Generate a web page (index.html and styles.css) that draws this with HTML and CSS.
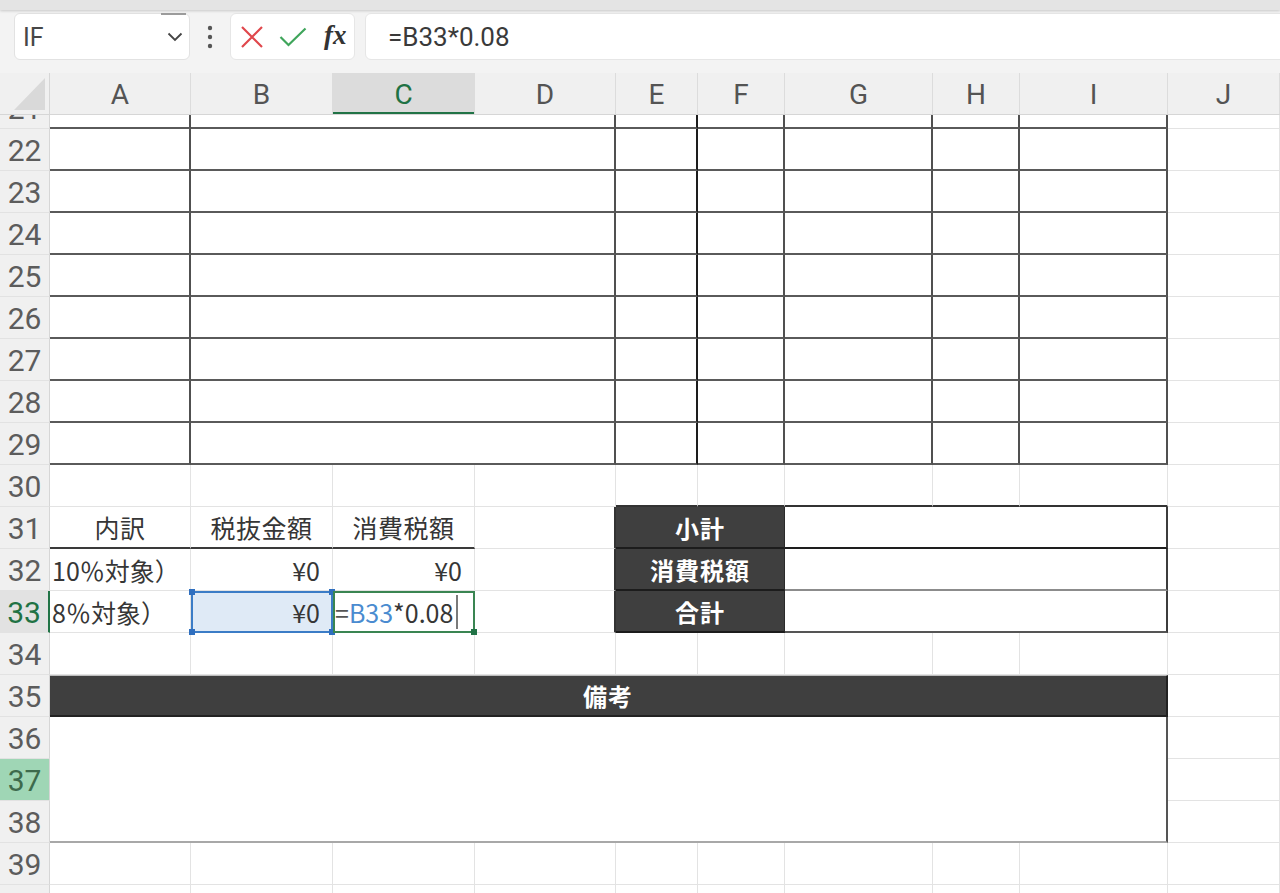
FILE: index.html
```html
<!DOCTYPE html>
<html lang="ja">
<head>
<meta charset="utf-8">
<title>Sheet</title>
<link rel="stylesheet" href="styles.css">
</head>
<body>
<div class="app">
  <div class="ribbon-edge"></div>
  <div class="fbar">
    <div class="namebox">
      <span class="nb-text">IF</span>
      <svg class="chev" width="16" height="10" viewBox="0 0 16 10"><polyline points="1.5,1.5 8,8 14.5,1.5" fill="none" stroke="#444" stroke-width="1.8"/></svg>
    </div>
    <div class="dots">
      <svg width="6" height="24" viewBox="0 0 6 24"><circle cx="3" cy="3" r="2.2" fill="#555"/><circle cx="3" cy="12" r="2.2" fill="#555"/><circle cx="3" cy="21" r="2.2" fill="#555"/></svg>
    </div>
    <div class="fx-tools">
      <svg class="ico-x" width="24" height="24" viewBox="0 0 24 24"><path d="M2 2 L22 22 M22 2 L2 22" stroke="#e0474c" stroke-width="2.2" fill="none"/></svg>
      <svg class="ico-ok" width="28" height="20" viewBox="0 0 28 20"><polyline points="1.5,10 9.5,18 26.5,1.5" fill="none" stroke="#3fa55b" stroke-width="2.2"/></svg>
      <span class="fx">fx</span>
    </div>
    <div class="formula">=B33*0.08</div>
  </div>

  <div class="colhead">
    <div class="corner"><svg width="50" height="41" viewBox="0 0 50 41"><polygon points="45,5 45,37 14,37" fill="#d9d9d9"/></svg></div>
    <div class="ch">A</div>
    <div class="ch">B</div>
    <div class="ch active">C</div>
    <div class="ch">D</div>
    <div class="ch">E</div>
    <div class="ch">F</div>
    <div class="ch">G</div>
    <div class="ch">H</div>
    <div class="ch">I</div>
    <div class="ch">J</div>
  </div>

  <div class="viewport">
    <div class="grid">
      <!-- 21 -->
      <div class="rh">21</div>
      <div class="c t"></div><div class="c t span3"></div><div class="c t heavy"></div><div class="c t"></div><div class="c t"></div><div class="c t"></div><div class="c t"></div><div class="c"></div>
      <!-- 22 -->
      <div class="rh">22</div>
      <div class="c t"></div><div class="c t span3"></div><div class="c t heavy"></div><div class="c t"></div><div class="c t"></div><div class="c t"></div><div class="c t"></div><div class="c"></div>
      <!-- 23 -->
      <div class="rh">23</div>
      <div class="c t"></div><div class="c t span3"></div><div class="c t heavy"></div><div class="c t"></div><div class="c t"></div><div class="c t"></div><div class="c t"></div><div class="c"></div>
      <!-- 24 -->
      <div class="rh">24</div>
      <div class="c t"></div><div class="c t span3"></div><div class="c t heavy"></div><div class="c t"></div><div class="c t"></div><div class="c t"></div><div class="c t"></div><div class="c"></div>
      <!-- 25 -->
      <div class="rh">25</div>
      <div class="c t"></div><div class="c t span3"></div><div class="c t heavy"></div><div class="c t"></div><div class="c t"></div><div class="c t"></div><div class="c t"></div><div class="c"></div>
      <!-- 26 -->
      <div class="rh">26</div>
      <div class="c t"></div><div class="c t span3"></div><div class="c t heavy"></div><div class="c t"></div><div class="c t"></div><div class="c t"></div><div class="c t"></div><div class="c"></div>
      <!-- 27 -->
      <div class="rh">27</div>
      <div class="c t"></div><div class="c t span3"></div><div class="c t heavy"></div><div class="c t"></div><div class="c t"></div><div class="c t"></div><div class="c t"></div><div class="c"></div>
      <!-- 28 -->
      <div class="rh">28</div>
      <div class="c t"></div><div class="c t span3"></div><div class="c t heavy"></div><div class="c t"></div><div class="c t"></div><div class="c t"></div><div class="c t"></div><div class="c"></div>
      <!-- 29 -->
      <div class="rh">29</div>
      <div class="c t"></div><div class="c t span3"></div><div class="c t heavy"></div><div class="c t"></div><div class="c t"></div><div class="c t"></div><div class="c t"></div><div class="c"></div>
      <!-- 30 -->
      <div class="rh">30</div>
      <div class="c"></div><div class="c"></div><div class="c"></div><div class="c"></div>
      <div class="c bb-dark"></div><div class="c bb-dark"></div><div class="c bb-dark"></div><div class="c bb-dark"></div><div class="c bb-dark"></div>
      <div class="c"></div>
      <!-- 31 -->
      <div class="rh">31</div>
      <div class="c center hdr-line">内訳</div>
      <div class="c center hdr-line">税抜金額</div>
      <div class="c center hdr-line">消費税額</div>
      <div class="c br-dark"></div>
      <div class="c lbl span2">小計</div>
      <div class="c val span3"></div>
      <div class="c"></div>
      <!-- 32 -->
      <div class="rh">32</div>
      <div class="c left">10％対象）</div>
      <div class="c right">¥0</div>
      <div class="c right">¥0</div>
      <div class="c br-dark"></div>
      <div class="c lbl span2">消費税額</div>
      <div class="c val span3 thin"></div>
      <div class="c"></div>
      <!-- 33 -->
      <div class="rh sel">33</div>
      <div class="c left">8％対象）</div>
      <div class="c right ref">¥0<span class="hd tl"></span><span class="hd tr"></span><span class="hd bl"></span><span class="hd br"></span></div>
      <div class="c edit"><span class="eq">=</span><span class="refc">B33</span><span>*0.08</span><span class="caret"></span><span class="fill"></span></div>
      <div class="c br-dark"></div>
      <div class="c lbl span2">合計</div>
      <div class="c val span3 last"></div>
      <div class="c"></div>
      <!-- 34 -->
      <div class="rh">34</div>
      <div class="c"></div><div class="c"></div><div class="c"></div><div class="c"></div><div class="c"></div><div class="c"></div><div class="c"></div><div class="c"></div><div class="c"></div><div class="c"></div>
      <!-- 35 -->
      <div class="rh">35</div>
      <div class="c bar span9">備考</div>
      <div class="c"></div>
      <!-- 36 -->
      <div class="rh">36</div>
      <div class="c memo"></div>
      <div class="c"></div>
      <!-- 37 -->
      <div class="rh hl">37</div>
      <div class="c"></div>
      <!-- 38 -->
      <div class="rh">38</div>
      <div class="c"></div>
      <!-- 39 -->
      <div class="rh">39</div>
      <div class="c"></div><div class="c"></div><div class="c"></div><div class="c"></div><div class="c"></div><div class="c"></div><div class="c"></div><div class="c"></div><div class="c"></div><div class="c"></div>
      <!-- 40 -->
      <div class="rh">40</div>
      <div class="c"></div><div class="c"></div><div class="c"></div><div class="c"></div><div class="c"></div><div class="c"></div><div class="c"></div><div class="c"></div><div class="c"></div><div class="c"></div>
    </div>
  </div>
</div>
</body>
</html>
```

FILE: styles.css
```css
html, body {
  margin: 0;
  padding: 0;
  background: #ffffff;
}

body {
  font-family: "Noto Sans CJK JP", "Noto Sans", sans-serif;
  color: #333;
}

.app {
  width: 1280px;
  height: 893px;
  overflow: hidden;
  display: flex;
  flex-direction: column;
}

.ribbon-edge {
  height: 10px;
  flex: none;
  background: #e4e4e4;
  box-shadow: 0 1px 3px rgba(0, 0, 0, 0.18);
  position: relative;
  z-index: 1;
}

/* formula bar */
.fbar {
  flex: none;
  height: 63px;
  box-sizing: border-box;
  background: #f3f3f3;
  display: flex;
  align-items: flex-start;
  padding: 3px 0 0 14px;
  overflow: hidden;
}

.namebox {
  flex: none;
  width: 176px;
  height: 47px;
  box-sizing: border-box;
  background: #fff;
  border: 1px solid #e2e2e2;
  border-radius: 6px;
  display: flex;
  align-items: center;
  justify-content: space-between;
  padding: 0 6px 0 8px;
  position: relative;
}

.namebox::before {
  content: "";
  position: absolute;
  top: -1px;
  right: 3px;
  width: 25px;
  height: 2px;
  background: #9c9c9c;
}

.nb-text {
  font-family: Roboto, "Liberation Sans", sans-serif;
  font-size: 25px;
  color: #474747;
  padding-top: 2px;
}

.dots {
  flex: none;
  width: 40px;
  height: 47px;
  display: flex;
  align-items: center;
  justify-content: center;
}

.fx-tools {
  flex: none;
  width: 125px;
  height: 47px;
  box-sizing: border-box;
  background: #fff;
  border: 1px solid #e6e6e6;
  border-radius: 6px;
  display: flex;
  align-items: center;
  padding-left: 9px;
}

.ico-x {
  flex: none;
}

.ico-ok {
  flex: none;
  margin-left: 15px;
}

.fx {
  margin-left: 17px;
  font-family: "Liberation Serif", "DejaVu Serif", serif;
  font-style: italic;
  font-weight: 700;
  font-size: 27px;
  color: #333;
  line-height: 1;
  margin-top: -3px;
}

.formula {
  flex: 1;
  height: 47px;
  box-sizing: border-box;
  margin-left: 10px;
  margin-right: -10px;
  background: #fff;
  border: 1px solid #e6e6e6;
  border-radius: 6px;
  padding-left: 22px;
  font-family: Roboto, "Liberation Sans", sans-serif;
  font-size: 26px;
  line-height: 47px;
  color: #3a3a3a;
}

/* column header */
.colhead {
  flex: none;
  height: 42px;
  box-sizing: border-box;
  display: grid;
  grid-template-columns: 50px 141px 142px 142px 141px 82px 87px 148px 87px 148px 112px;
  background: #f0f0f0;
  border-bottom: 1px solid #d6d6d6;
}

.corner {
  border-right: 1px solid #d6d6d6;
}

.corner svg {
  display: block;
}

.ch {
  display: flex;
  align-items: center;
  justify-content: center;
  font-family: "Liberation Sans Narrow", Roboto, "Liberation Sans", sans-serif;
  font-size: 28px;
  color: #545454;
  border-right: 1px solid #dcdcdc;
  padding-top: 2px;
  box-sizing: border-box;
}

.ch.active {
  background: #dcdcdc;
  color: #1f7244;
  box-shadow: inset 0 -2px 0 #217346;
}

/* sheet body */
.viewport {
  flex: 1;
  overflow: hidden;
}

.grid {
  display: grid;
  grid-template-columns: 50px 141px 142px 142px 141px 82px 87px 148px 87px 148px 112px;
  grid-auto-rows: 42px;
  margin-top: -28px;
}

.rh {
  grid-column: 1;
  display: flex;
  align-items: center;
  justify-content: center;
  box-sizing: border-box;
  background: #f0f0f0;
  border-right: 1px solid #d6d6d6;
  border-bottom: 1px solid #e2e2e2;
  font-family: "Liberation Sans Narrow", Roboto, "Liberation Sans", sans-serif;
  font-size: 30px;
  color: #5c5c5c;
  padding-top: 2px;
}

.rh.sel {
  background: #e2e2e2;
  color: #1f7244;
  border-right: 2px solid #217346;
}

.rh.hl {
  background: #9fd6b5;
  color: #3d6a4c;
}

.c {
  box-sizing: border-box;
  min-width: 0;
  display: flex;
  align-items: center;
  border-right: 1px solid #e3e3e3;
  border-bottom: 1px solid #e3e3e3;
  font-size: 25px;
  color: #363636;
  white-space: nowrap;
  overflow: hidden;
}

.span2 { grid-column: span 2; }
.span3 { grid-column: span 3; }
.span9 { grid-column: span 9; }

.t {
  border-right: 2px solid #505050;
  border-bottom: 2px solid #5a5a5a;
}

.t.heavy {
  border-right-color: #1d1d1d;
}

.bb-dark {
  border-bottom: 2px solid #333;
}

.br-dark {
  border-right: 2px solid #333;
}

.center {
  justify-content: center;
  letter-spacing: 0.5px;
}

.left {
  justify-content: flex-start;
  padding-left: 2px;
}

.right {
  justify-content: flex-end;
  padding-right: 12px;
}

.hdr-line {
  border-bottom: 2px solid #3a3a3a;
}

.lbl {
  background: #3f3f3f;
  color: #fff;
  font-weight: 700;
  font-size: 24px;
  letter-spacing: 1px;
  justify-content: center;
  border-right: 1px solid #2a2a2a;
  border-bottom: 2px solid #1c1c1c;
}

.val {
  border-right: 2px solid #3c3c3c;
  border-bottom: 2px solid #1e1e1e;
}

.val.thin {
  border-bottom: 2px solid #8c8c8c;
}

.val.last {
  border-bottom: 2px solid #555;
}

.ref {
  position: relative;
  overflow: visible;
  background: #dfeaf6;
  border: 2px solid #3b7cc6;
  padding-right: 11px;
}

.hd {
  position: absolute;
  width: 6px;
  height: 6px;
  background: #2f6fbf;
}

.hd.tl { left: -4px; top: -4px; }
.hd.tr { right: -4px; top: -4px; }
.hd.bl { left: -4px; bottom: -4px; }
.hd.br { right: -4px; bottom: -4px; }

.edit {
  position: relative;
  overflow: visible;
  border: 2px solid #3a8552;
  padding-left: 0;
}

.eq {
  color: #555;
}

.refc {
  color: #4a8bd0;
}

.caret {
  display: inline-block;
  width: 2px;
  height: 34px;
  background: #7a7a7a;
  margin-left: 3px;
}

.fill {
  position: absolute;
  right: -4px;
  bottom: -4px;
  width: 6px;
  height: 6px;
  background: #217346;
}

.bar {
  background: #3f3f3f;
  color: #fff;
  font-weight: 700;
  font-size: 24px;
  letter-spacing: 1px;
  justify-content: center;
  border-top: 1px solid #bdbdbd;
  border-right: 2px solid #222;
  border-bottom: 2px solid #222;
}

.memo {
  grid-column: span 9;
  grid-row: span 3;
  border-right: 2px solid #555;
  border-bottom: 2px solid #a8a8a8;
}
```
